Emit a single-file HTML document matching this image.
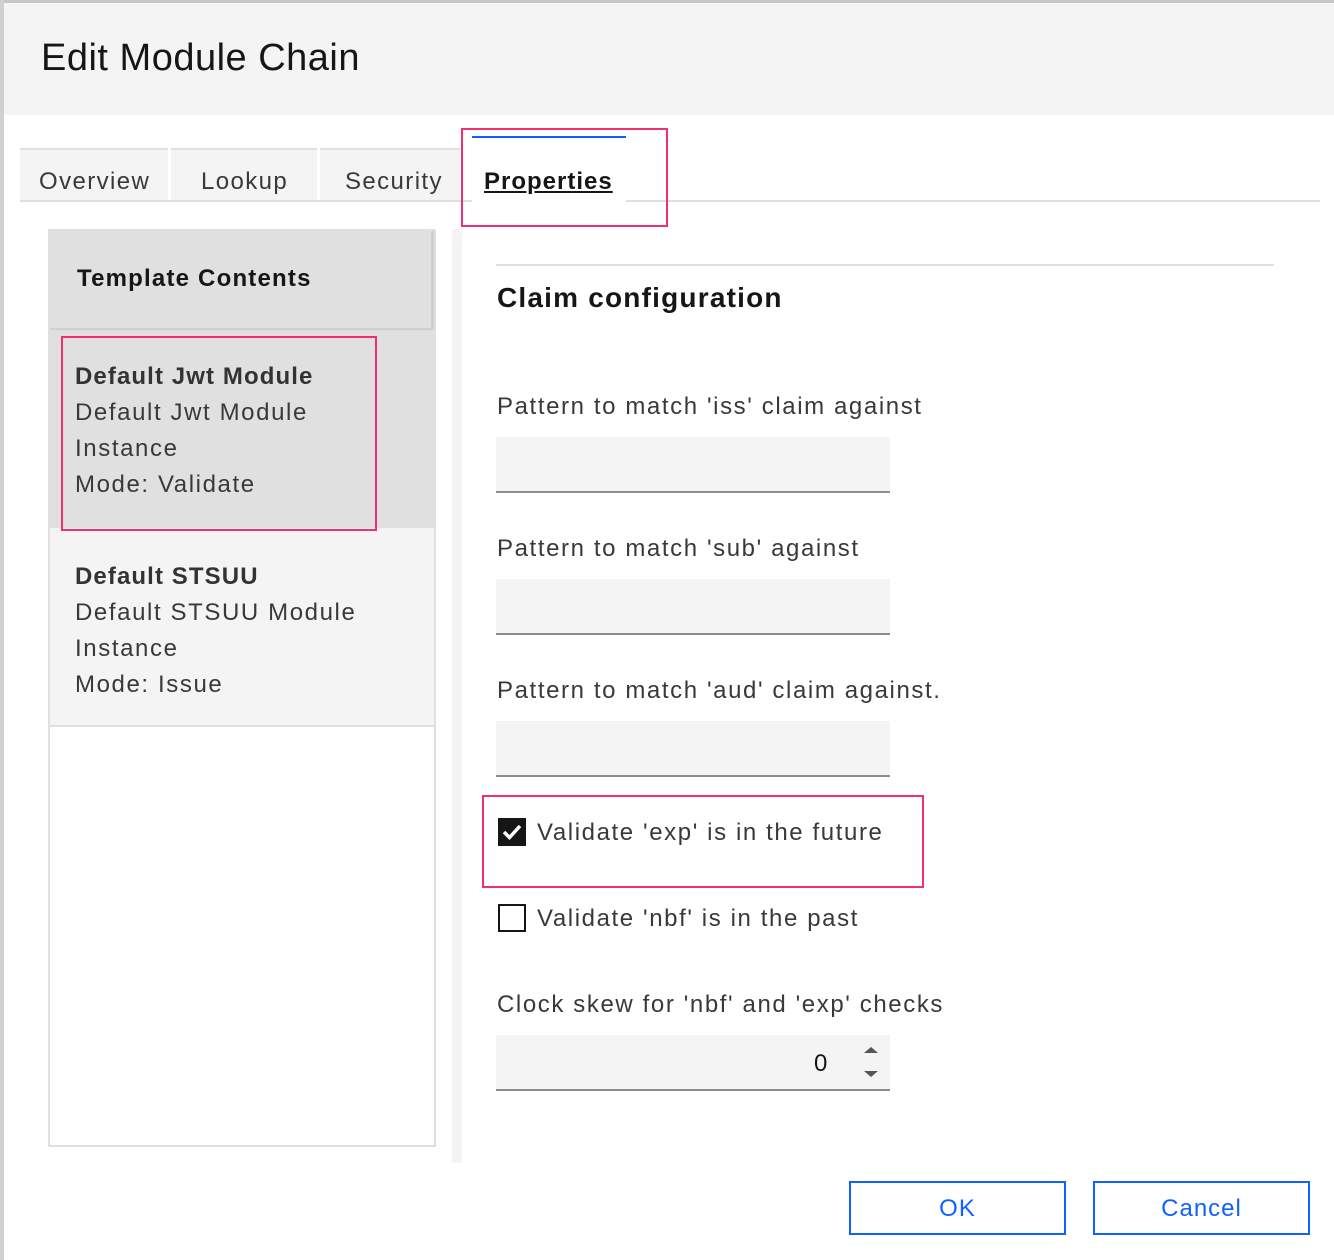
<!DOCTYPE html>
<html><head><meta charset="utf-8"><style>
*{box-sizing:border-box;margin:0;padding:0}
body{width:1334px;height:1260px;background:#fff;font-family:"Liberation Sans",sans-serif;position:relative;overflow:hidden;color:#161616}
.a{position:absolute}
.t{letter-spacing:1.6px;font-size:24px;color:#393939;white-space:nowrap}
.inp{position:absolute;left:496px;width:394px;height:56px;background:#f4f4f4;border-bottom:2px solid #8d8d8d}
.pink{position:absolute;border:2px solid #f0306e}
.btn{position:absolute;top:1181px;width:217px;height:54px;border:2px solid #0f62fe;color:#0f62fe;font-size:24px;text-align:center;line-height:52px;letter-spacing:1px}
</style></head><body>
<div class="a" style="left:0;top:0;width:1334px;height:115px;background:#f4f4f4;border-top:3px solid #c6c6c6"></div>
<div class="a" style="left:0;top:0;width:4px;height:1260px;background:#d0d0d0"></div>
<div class="a" style="left:41px;top:37px;font-size:38px;color:#161616;letter-spacing:0.5px">Edit Module Chain</div>

<div class="a" style="left:20px;top:200px;width:1300px;height:2px;background:#e0e0e0"></div>
<div class="a" style="left:20px;top:148px;width:148px;height:52px;background:#f4f4f4;border-top:2px solid #e0e0e0"></div>
<div class="a" style="left:171px;top:148px;width:146px;height:52px;background:#f4f4f4;border-top:2px solid #e0e0e0"></div>
<div class="a" style="left:320px;top:148px;width:140px;height:52px;background:#f4f4f4;border-top:2px solid #e0e0e0"></div>
<div class="a" style="left:472px;top:136px;width:154px;height:66px;background:#fff;border-top:2px solid #0f62fe"></div>
<div class="a t" style="left:39px;top:168px;color:#393939;letter-spacing:1.4px">Overview</div>
<div class="a t" style="left:201px;top:168px;color:#393939;letter-spacing:1.4px">Lookup</div>
<div class="a t" style="left:345px;top:168px;color:#393939;letter-spacing:1.4px">Security</div>
<div class="a t" style="left:484px;top:168px;color:#161616;font-weight:bold;text-decoration:underline;letter-spacing:1px">Properties</div>
<div class="pink" style="left:461px;top:128px;width:207px;height:99px"></div>

<div class="a" style="left:48px;top:229px;width:388px;height:918px;border:2px solid #e0e0e0;background:#fff"></div>
<div class="a" style="left:50px;top:231px;width:384px;height:97px;background:#e0e0e0;border-right:3px solid #cfcfcf"></div>
<div class="a" style="left:50px;top:328px;width:384px;height:2px;background:#d0d0d0"></div>
<div class="a" style="left:77px;top:265px;font-size:24px;font-weight:bold;letter-spacing:1.2px">Template Contents</div>
<div class="a" style="left:50px;top:330px;width:384px;height:198px;background:#e0e0e0"></div>
<div class="a" style="left:50px;top:528px;width:384px;height:199px;background:#f4f4f4;border-bottom:2px solid #e0e0e0"></div>
<div class="a t" style="left:75px;top:359px;line-height:36px;color:#393939"><b style="color:#333;letter-spacing:1.1px">Default Jwt Module</b><br>Default Jwt Module<br>Instance<br>Mode: Validate</div>
<div class="a t" style="left:75px;top:559px;line-height:36px;color:#393939"><b style="color:#333;letter-spacing:1.1px">Default STSUU</b><br>Default STSUU Module<br>Instance<br>Mode: Issue</div>
<div class="pink" style="left:61px;top:336px;width:316px;height:195px"></div>

<div class="a" style="left:452px;top:229px;width:10px;height:934px;background:#f4f4f4"></div>

<div class="a" style="left:496px;top:264px;width:778px;height:2px;background:#e0e0e0"></div>
<div class="a" style="left:497px;top:282px;font-size:28px;font-weight:bold;letter-spacing:1.2px">Claim configuration</div>
<div class="a t" style="left:497px;top:393px">Pattern to match 'iss' claim against</div>
<div class="inp" style="top:437px"></div>
<div class="a t" style="left:497px;top:535px">Pattern to match 'sub' against</div>
<div class="inp" style="top:579px"></div>
<div class="a t" style="left:497px;top:677px">Pattern to match 'aud' claim against.</div>
<div class="inp" style="top:721px"></div>

<div class="a" style="left:498px;top:818px;width:28px;height:28px;background:#161616"></div>
<svg class="a" style="left:498px;top:818px" width="28" height="28"><path d="M6 14 L11.5 19.5 L22 8" stroke="#fff" stroke-width="3.5" fill="none"/></svg>
<div class="a t" style="left:537px;top:819px">Validate 'exp' is in the future</div>
<div class="pink" style="left:482px;top:795px;width:442px;height:93px"></div>

<div class="a" style="left:498px;top:904px;width:28px;height:28px;border:2px solid #161616;background:#fff"></div>
<div class="a t" style="left:537px;top:905px">Validate 'nbf' is in the past</div>

<div class="a t" style="left:497px;top:991px">Clock skew for 'nbf' and 'exp' checks</div>
<div class="inp" style="top:1035px"></div>
<div class="a" style="left:814px;top:1050px;font-size:24px;color:#161616">0</div>
<svg class="a" style="left:860px;top:1044px" width="22" height="40"><path d="M4 9 L11 3 L18 9Z M4 27 L11 33 L18 27Z" fill="#555"/></svg>

<div class="btn" style="left:849px">OK</div>
<div class="btn" style="left:1093px">Cancel</div>
</body></html>
